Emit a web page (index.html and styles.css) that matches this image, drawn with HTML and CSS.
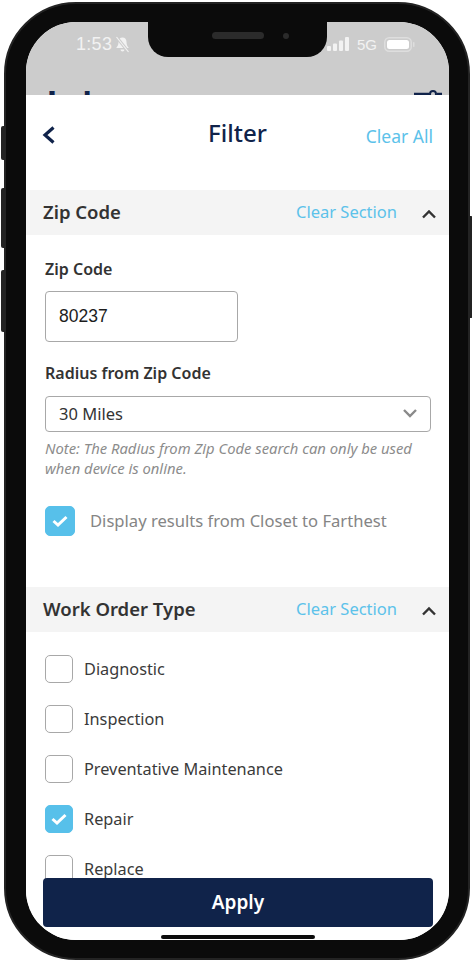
FILE: index.html
```html
<!DOCTYPE html>
<html lang="en">
<head>
    <meta charset="UTF-8">
    <meta name="viewport" content="width=device-width, initial-scale=1.0">
    <title>Filter</title>
    <link rel="stylesheet" href="styles.css">
</head>
<body>
    <div class="phone">
        <span class="side-btn btn-mute"></span>
        <span class="side-btn btn-up"></span>
        <span class="side-btn btn-down"></span>
        <span class="side-btn btn-power"></span>

        <div class="screen">
            <div class="notch">
                <span class="speaker"></span>
                <span class="camera"></span>
            </div>

            <div class="backdrop">
                <div class="status">
                    <div class="status-left">
                        <span class="time">1:53</span>
                        <svg width="15" height="17" viewBox="0 0 15 17">
                            <path d="M7.5 1.5c-2.6 0-4 2-4 4.5 0 3-1 4.5-2.3 6h12.6c-1.300-1.500-2.300-3-2.300-6 0-2.500-1.400-4.500-4-4.500z" fill="#f2f2f2"/>
                            <path d="M5.500 13.500a2 2 0 0 0 4 0z" fill="#f2f2f2"/>
                            <path d="M1.500 1l12 15" stroke="#cccccc" stroke-width="3"/>
                            <path d="M1.500 1l12 15" stroke="#f2f2f2" stroke-width="1.200"/>
                        </svg>
                    </div>
                    <div class="status-right">
                        <svg width="23" height="14" viewBox="0 0 23 14">
                            <rect x="0" y="9" width="4" height="5" rx="1" fill="#f2f2f2"/>
                            <rect x="6" y="6.500" width="4" height="7.500" rx="1" fill="#f2f2f2"/>
                            <rect x="12" y="3.500" width="4" height="10.500" rx="1" fill="#f2f2f2"/>
                            <rect x="18" y="0" width="4" height="14" rx="1" fill="#f2f2f2"/>
                        </svg>
                        <span class="network">5G</span>
                        <svg width="31" height="15" viewBox="0 0 31 15">
                            <rect x="0.750" y="0.750" width="26.500" height="13.500" rx="4.500" fill="none" stroke="#dedede" stroke-width="1.500"/>
                            <rect x="3" y="3" width="22" height="9" rx="2.500" fill="#ffffff"/>
                            <rect x="29" y="5" width="1.500" height="5" rx="0.700" fill="#dedede"/>
                        </svg>
                    </div>
                </div>
                <div class="backdrop-title">
                    <span class="page-name">Job</span>
                    <svg class="backdrop-icon" width="28" height="14" viewBox="0 0 28 14">
                        <path d="M0 4h15M23 4h5" stroke="#10234a" stroke-width="2.500"/>
                        <circle cx="19" cy="4" r="3" fill="none" stroke="#10234a" stroke-width="2"/>
                    </svg>
                </div>
            </div>

            <div class="sheet">
                <div class="sheet-header">
                    <svg class="back" width="16" height="20" viewBox="0 0 16 20">
                        <path d="M12.500 2.500 4 10l8.500 7.500" fill="none" stroke="#10234a" stroke-width="3.200"/>
                    </svg>
                    <h1>Filter</h1>
                    <a class="clear-all">Clear All</a>
                </div>

                <div class="section-bar">
                    <h2>Zip Code</h2>
                    <a class="clear-section">Clear Section</a>
                    <svg class="caret" width="16" height="10" viewBox="0 0 16 10">
                        <path d="M2 8.500 8 2.500l6 6" fill="none" stroke="#333333" stroke-width="2.400"/>
                    </svg>
                </div>

                <div class="zip-body">
                    <label class="field-label">Zip Code</label>
                    <div class="zip-input">80237</div>
                    <label class="field-label radius-label">Radius from Zip Code</label>
                    <div class="select">
                        <span>30 Miles</span>
                        <svg width="16" height="10" viewBox="0 0 16 10">
                            <path d="M2 2l6 6 6-6" fill="none" stroke="#8a8a8a" stroke-width="2.400"/>
                        </svg>
                    </div>
                    <p class="note">Note: The Radius from Zip Code search can only be used when device is online.</p>
                    <div class="sort-row">
                        <span class="check big checked">
                            <svg width="16" height="12" viewBox="0 0 16 12"><path d="M1.500 6l4.500 4 8.500-8" fill="none" stroke="#fff" stroke-width="3"/></svg>
                        </span>
                        <span class="sort-text">Display results from Closet to Farthest</span>
                    </div>
                </div>

                <div class="section-bar">
                    <h2>Work Order Type</h2>
                    <a class="clear-section">Clear Section</a>
                    <svg class="caret" width="16" height="10" viewBox="0 0 16 10">
                        <path d="M2 8.500 8 2.500l6 6" fill="none" stroke="#333333" stroke-width="2.400"/>
                    </svg>
                </div>

                <div class="type-list">
                    <div class="type-row"><span class="check"></span>Diagnostic</div>
                    <div class="type-row"><span class="check"></span>Inspection</div>
                    <div class="type-row"><span class="check"></span>Preventative Maintenance</div>
                    <div class="type-row"><span class="check checked"><svg width="16" height="12" viewBox="0 0 16 12"><path d="M1.500 6l4.500 4 8.500-8" fill="none" stroke="#fff" stroke-width="3"/></svg></span>Repair</div>
                    <div class="type-row"><span class="check"></span>Replace</div>
                </div>
            </div>

            <button class="apply">Apply</button>
            <span class="home-bar"></span>
        </div>
    </div>
</body>
</html>
```

FILE: styles.css
```css
html, body { margin: 0; padding: 0; background: #ffffff; }
body { font-family: "Noto Sans", sans-serif; width: 472px; height: 961px; overflow: hidden; }

.phone {
    position: relative;
    box-sizing: border-box;
    width: 466px;
    height: 958px;
    margin: 2px 0 0 4px;
    padding: 18px 19px 18px 20px;
    background: #0b0b0b;
    border: 2px solid #232323;
    border-radius: 72px;
}
.side-btn { position: absolute; width: 3px; background: #232323; }
.btn-mute { left: -5px; top: 122px; height: 34px; border-radius: 2px 0 0 2px; }
.btn-up { left: -5px; top: 184px; height: 60px; border-radius: 2px 0 0 2px; }
.btn-down { left: -5px; top: 266px; height: 62px; border-radius: 2px 0 0 2px; }
.btn-power { right: -5px; top: 212px; height: 102px; border-radius: 0 2px 2px 0; }

.screen {
    position: relative;
    display: flex;
    flex-direction: column;
    height: 100%;
    overflow: hidden;
    background: #ffffff;
    border-radius: 50px;
}

.notch {
    position: absolute;
    top: 0;
    left: 122px;
    z-index: 3;
    display: flex;
    align-items: center;
    width: 179px;
    height: 35px;
    background: #0b0b0b;
    border-radius: 0 0 20px 20px;
}
.speaker { width: 52px; height: 7px; margin: -8px 0 0 64px; background: #2b2b2b; border-radius: 4px; }
.camera { width: 6px; height: 6px; margin: -8px 0 0 19px; background: #2b2b2b; border-radius: 50%; }

.backdrop { flex: none; height: 73px; overflow: hidden; background: #cccccc; }
.status {
    display: flex;
    justify-content: space-between;
    align-items: center;
    height: 18px;
    padding: 13px 34px 0 50px;
    color: #f2f2f2;
    font-family: "Liberation Sans", sans-serif;
}
.status-left, .status-right { display: flex; align-items: center; }
.status-left { gap: 3px; }
.status-right { gap: 7px; }
.time { font-size: 18px; letter-spacing: 0.3px; }
.network { font-size: 15px; }

.backdrop-title {
    display: flex;
    justify-content: space-between;
    align-items: flex-start;
    padding: 29px 7px 0 15px;
}
.page-name { color: #10234a; font-family: Lato, sans-serif; font-size: 38px; font-weight: 700; letter-spacing: 2px; line-height: 44px; }
.backdrop-icon { margin-top: 8px; }

.sheet {
    flex: 1;
    min-height: 0;
    overflow: hidden;
    background: #ffffff;
    border-radius: 8px 8px 0 0;
}

.sheet-header {
    position: relative;
    display: flex;
    justify-content: space-between;
    align-items: center;
    box-sizing: border-box;
    height: 95px;
    padding: 0 16px 16px 15px;
}
.sheet-header h1 {
    position: absolute;
    left: 0;
    right: 0;
    top: 19px;
    margin: 0;
    color: #10234a;
    font-size: 24px;
    font-weight: 500;
    line-height: 38px;
    text-align: center;
}
.clear-all { margin-top: 2px; color: #5cc2ea; font-size: 17.500px; }

.section-bar {
    box-sizing: border-box;
    display: flex;
    align-items: center;
    height: 45px;
    padding: 0 12px 2px 17px;
    background: #f4f4f4;
}
.section-bar h2 { flex: 1; margin: 0; color: #333333; font-size: 18.500px; font-weight: 600; }
.clear-section { margin-right: 24px; color: #5cc2ea; font-size: 16.500px; }
.caret { margin-top: 5px; }

.zip-body { box-sizing: border-box; height: 352px; padding: 23px 18px 0 19px; }
.field-label { display: block; color: #333333; font-size: 16px; font-weight: 600; line-height: 22px; }
.radius-label { margin-top: 20px; }
.zip-input {
    box-sizing: border-box;
    display: flex;
    align-items: center;
    width: 193px;
    height: 51px;
    margin-top: 11px;
    padding-left: 13px;
    color: #1d1d1d;
    font-family: "Liberation Sans", sans-serif;
    font-size: 17.500px;
    background: #ffffff;
    border: 1px solid #a8a8a8;
    border-radius: 4px;
}
.select {
    box-sizing: border-box;
    display: flex;
    justify-content: space-between;
    align-items: center;
    height: 36px;
    margin-top: 12px;
    padding: 0 12px 2px 13px;
    color: #333333;
    font-size: 16.500px;
    border: 1px solid #a8a8a8;
    border-radius: 4px;
}
.note { margin: 6px 0 0; color: #8c8c8c; font-size: 14.800px; font-style: italic; line-height: 20px; }
.sort-row { display: flex; align-items: center; gap: 15px; margin-top: 28px; }
.sort-text { margin-top: -2px; color: #858585; font-size: 16.600px; }

.check {
    box-sizing: border-box;
    flex: none;
    display: flex;
    justify-content: center;
    align-items: center;
    width: 28px;
    height: 28px;
    background: #ffffff;
    border: 1px solid #a8a8a8;
    border-radius: 5px;
}
.check.big { width: 30px; height: 30px; }
.check.checked { background: #57c0ea; border-color: #57c0ea; }

.type-list { display: flex; flex-direction: column; gap: 22px; padding: 23px 0 0 19px; }
.type-row { display: flex; align-items: center; gap: 11px; color: #3a3a3a; font-size: 16.300px; }

.apply {
    position: absolute;
    left: 17px;
    bottom: 13px;
    width: 390px;
    height: 49px;
    padding-bottom: 3px;
    color: #ffffff;
    font-family: "Noto Sans", sans-serif;
    font-size: 19px;
    font-weight: 600;
    background: #10234a;
    border: none;
    border-radius: 4px;
}
.home-bar {
    position: absolute;
    left: 135px;
    bottom: 1px;
    width: 154px;
    height: 4px;
    background: #0b0b0b;
    border-radius: 3px;
}
```
